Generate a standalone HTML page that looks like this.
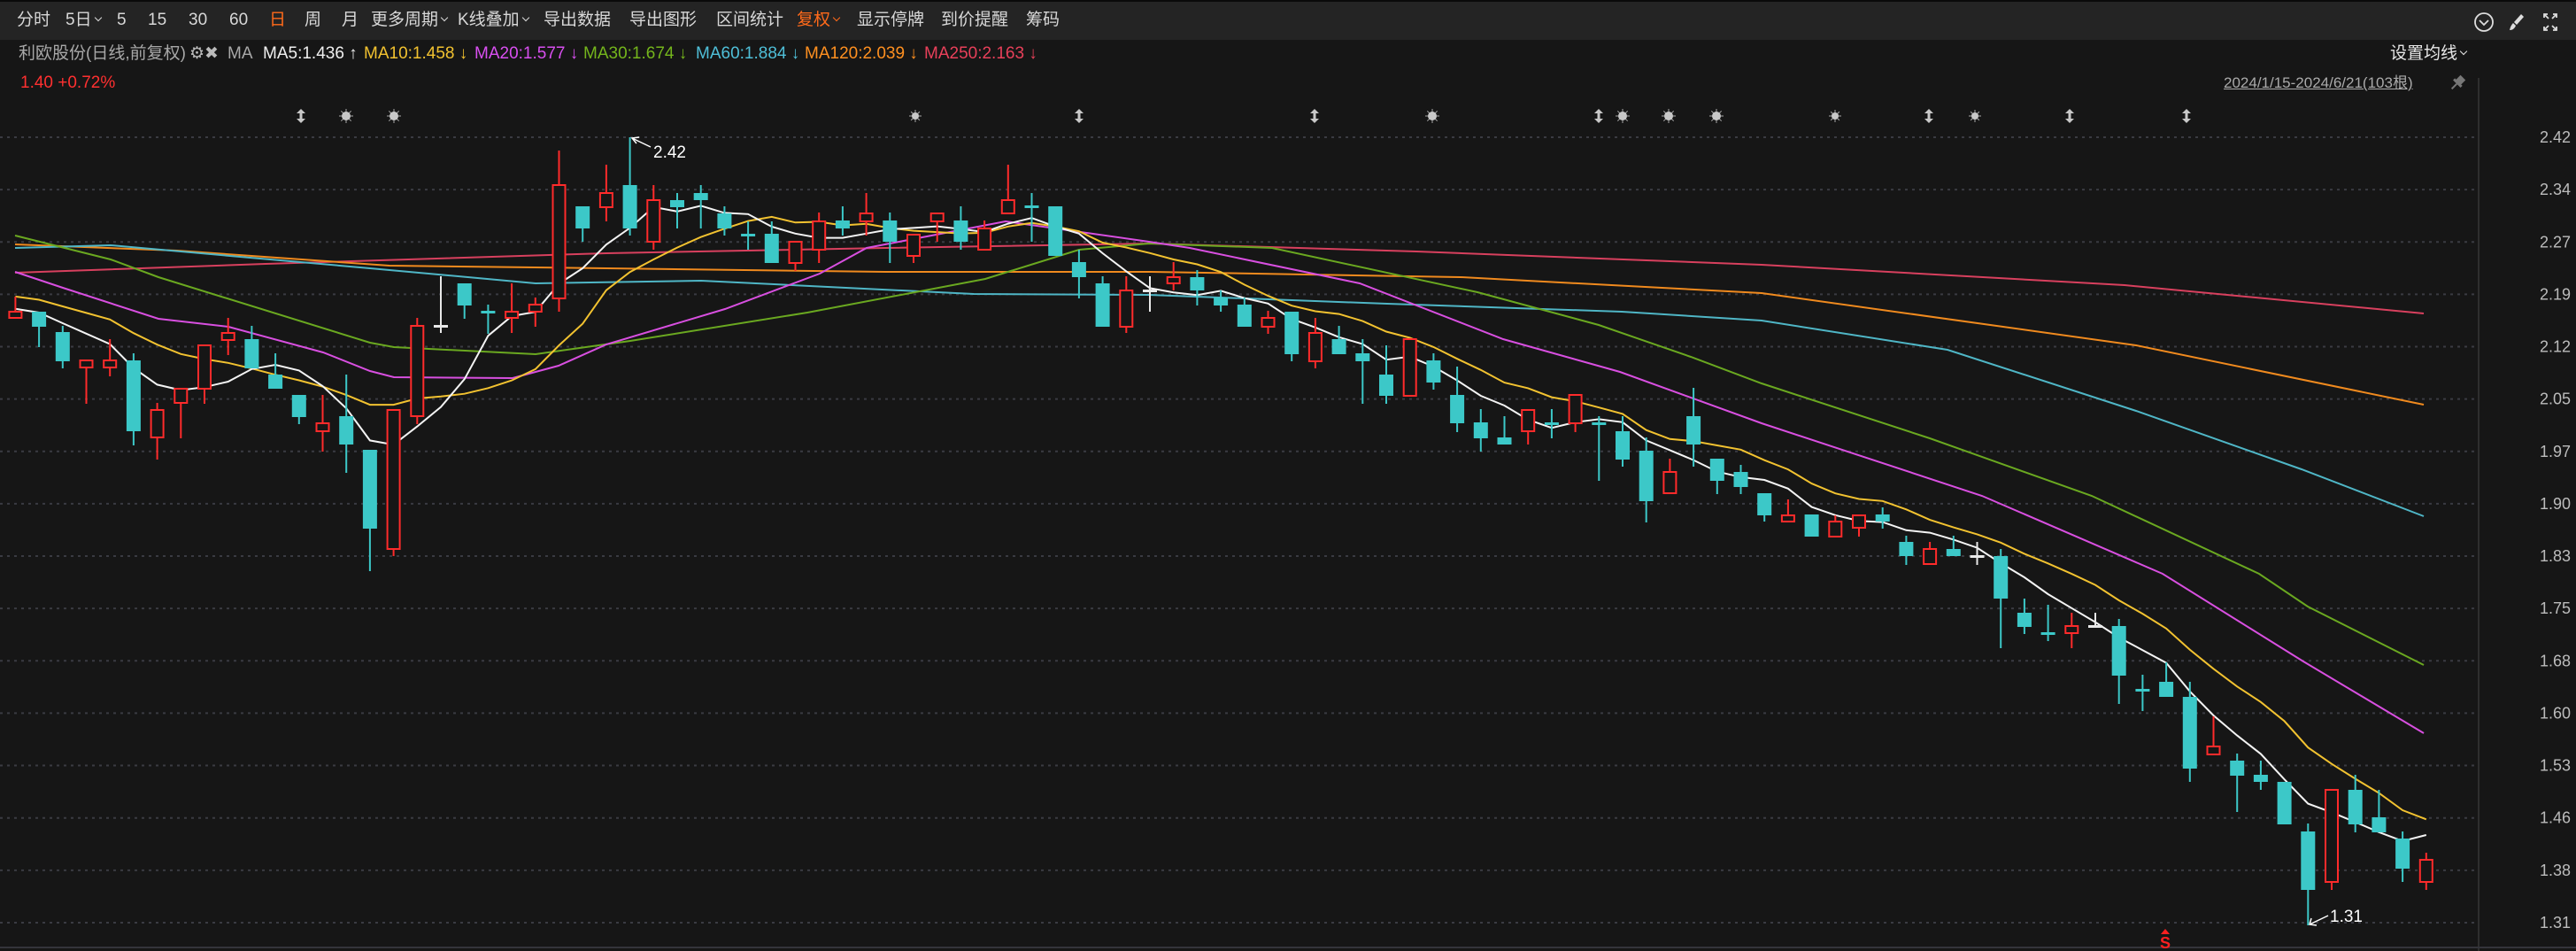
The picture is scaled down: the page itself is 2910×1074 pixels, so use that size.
<!DOCTYPE html>
<html><head><meta charset="utf-8">
<style>
html,body{margin:0;padding:0;background:#161616;}
body{width:2910px;height:1074px;overflow:hidden;position:relative;font-family:"Liberation Sans","Noto Sans CJK SC",sans-serif;}
#bar{position:absolute;left:0;top:0;width:2910px;height:45px;background:#242424;border-top:2px solid #0a0a0a;box-sizing:border-box;}
.t{position:absolute;white-space:nowrap;font-size:19px;line-height:20px;color:#d8d8d8;}
.cv{display:inline-block;width:5px;height:5px;border-right:1.5px solid currentColor;border-bottom:1.5px solid currentColor;transform:rotate(45deg);margin:0 3px 5px 4px;vertical-align:middle;}
svg{position:absolute;left:0;top:0;}
</style></head>
<body>
<div id="bar"></div>
<div class="t" style="left:19px;top:13px">分时</div>
<div class="t" style="left:74px;top:13px">5日<span class="cv"></span></div>
<div class="t" style="left:132px;top:13px">5</div>
<div class="t" style="left:167px;top:13px">15</div>
<div class="t" style="left:213px;top:13px">30</div>
<div class="t" style="left:259px;top:13px">60</div>
<div class="t" style="left:304px;top:13px;color:#ff6a1a">日</div>
<div class="t" style="left:344px;top:13px">周</div>
<div class="t" style="left:386px;top:13px">月</div>
<div class="t" style="left:419px;top:13px">更多周期<span class="cv"></span></div>
<div class="t" style="left:517px;top:13px">K线叠加<span class="cv"></span></div>
<div class="t" style="left:614px;top:13px">导出数据</div>
<div class="t" style="left:711px;top:13px">导出图形</div>
<div class="t" style="left:809px;top:13px">区间统计</div>
<div class="t" style="left:900px;top:13px;color:#ff6a1a">复权<span class="cv"></span></div>
<div class="t" style="left:968px;top:13px">显示停牌</div>
<div class="t" style="left:1063px;top:13px">到价提醒</div>
<div class="t" style="left:1159px;top:13px">筹码</div>

<div class="t" style="left:21px;top:51px;color:#a8a8a8">利欧股份(日线,前复权)</div>
<div class="t" style="left:214px;top:51px;color:#bbb">⚙✖</div>
<div class="t" style="left:257px;top:51px;color:#a8a8a8">MA</div>
<div class="t" style="left:297px;top:51px;color:#f0f0f0">MA5:1.436 ↑</div>
<div class="t" style="left:411px;top:51px;color:#f2c230">MA10:1.458 ↓</div>
<div class="t" style="left:536px;top:51px;color:#d84ff0">MA20:1.577 ↓</div>
<div class="t" style="left:659px;top:51px;color:#74b51c">MA30:1.674 ↓</div>
<div class="t" style="left:786px;top:51px;color:#4fbfd8">MA60:1.884 ↓</div>
<div class="t" style="left:909px;top:51px;color:#ff9020">MA120:2.039 ↓</div>
<div class="t" style="left:1044px;top:51px;color:#e8405a">MA250:2.163 ↓</div>
<div class="t" style="left:23px;top:84px;color:#ff3030">1.40 +0.72%</div>

<div class="t" style="left:2700px;top:51px;color:#e8e8e8">设置均线<span class="cv"></span></div>
<div class="t" style="left:2512px;top:84px;color:#aaa;font-size:17px;text-decoration:underline">2024/1/15-2024/6/21(103根)</div>

<svg id="s" width="2910" height="1074" xmlns="http://www.w3.org/2000/svg"></svg>
<script>
var D=[
[352,359,335,359,'r'],[352,369,352,392,'g'],[375,408,368,416,'g'],[407,415,407,456,'r'],[407,415,383,425,'r'],
[407,487,399,503,'g'],[463,494,455,519,'r'],[439,455,439,495,'r'],[390,439,390,456,'r'],[376,384,359,401,'r'],
[383,416,368,416,'g'],[423,439,399,439,'g'],[446,471,446,479,'g'],[478,487,446,510,'r'],[470,502,423,534,'g'],
[508,597,508,645,'g'],[463,620,463,628,'r'],[368,470,359,479,'r'],[368,368,312,376,'w'],[320,345,320,360,'g'],
[352,352,344,377,'g'],[352,359,320,376,'r'],[344,352,336,369,'r'],[209,337,170,352,'r'],[233,258,233,273,'g'],
[218,234,186,250,'r'],[209,258,155,266,'g'],[226,273,209,282,'r'],[226,234,218,258,'g'],[218,226,209,258,'g'],
[241,258,233,266,'g'],[265,265,250,282,'g'],[264,297,250,297,'g'],[273,297,273,306,'r'],[250,282,240,297,'r'],
[249,258,233,266,'g'],[241,250,218,266,'r'],[249,273,240,297,'g'],[265,289,265,297,'r'],[241,250,241,273,'r'],
[249,273,233,282,'g'],[258,282,249,282,'r'],[226,241,186,241,'r'],[233,233,218,273,'g'],[233,289,233,289,'g'],
[296,313,282,337,'g'],[320,369,312,369,'g'],[328,369,312,376,'r'],[328,328,312,352,'w'],[313,320,296,328,'r'],
[313,328,305,345,'g'],[336,345,328,352,'g'],[344,369,336,369,'g'],[359,369,351,377,'r'],[352,400,352,408,'g'],
[376,408,359,416,'r'],[383,400,368,400,'g'],[399,408,383,456,'g'],[423,447,390,456,'g'],[383,447,383,447,'r'],
[407,432,399,440,'g'],[446,478,414,488,'g'],[477,495,462,510,'g'],[494,502,470,502,'g'],[463,487,463,502,'r'],
[478,478,462,495,'g'],[446,478,446,488,'r'],[478,478,470,543,'g'],[487,519,470,527,'g'],[509,566,494,590,'g'],
[533,557,518,557,'r'],[470,502,438,527,'g'],[518,543,518,558,'g'],[533,550,525,558,'g'],[557,582,557,589,'g'],
[582,589,564,589,'r'],[581,606,581,606,'g'],[589,606,582,606,'r'],[582,596,582,606,'r'],[581,589,573,597,'g'],
[612,628,605,638,'g'],[620,637,612,637,'r'],[620,628,605,628,'g'],[628,628,612,638,'w'],[628,676,620,732,'g'],
[692,708,676,716,'g'],[715,715,683,724,'g'],[707,715,692,732,'r'],[707,707,692,707,'w'],[707,763,699,795,'g'],
[779,779,762,803,'g'],[770,787,748,787,'g'],[787,868,770,883,'g'],[843,852,809,852,'r'],[859,876,851,917,'g'],
[875,883,859,892,'g'],[883,931,883,931,'g'],[939,1005,930,1045,'g'],[892,996,892,1005,'r'],[892,931,875,940,'g'],
[923,940,892,940,'g'],[947,981,939,996,'g'],[971,996,963,1005,'r']];
var h='';
function X(i){return 17.4+i*26.7;}
var labs=['2.42','2.34','2.27','2.19','2.12','2.05','1.97','1.90','1.83','1.75','1.68','1.60','1.53','1.46','1.38','1.31'];
for(var k=0;k<16;k++){var y=155+k*59.13;
h+='<line x1="0" y1="'+y+'" x2="2800" y2="'+y+'" stroke="#3a3b42" stroke-width="2" stroke-dasharray="3,5"/>';
h+='<text x="2904" y="'+(y+6)+'" fill="#bcbcbc" font-size="18" text-anchor="end" font-family="Liberation Sans,sans-serif">'+labs[k]+'</text>';}
h+='<line x1="2800" y1="88" x2="2800" y2="1074" stroke="#2e2e2e" stroke-width="2"/>';
h+='<line x1="0" y1="1070" x2="2910" y2="1070" stroke="#34343a" stroke-width="2"/>';
function pl(pts,c){var s='';for(var i=0;i<pts.length;i++)s+=pts[i][0]+','+pts[i][1]+' ';return '<polyline points="'+s+'" fill="none" stroke="'+c+'" stroke-width="2"/>';}
h+=pl([[17,308],[300,298],[685,286],[1000,280],[1300,275],[1600,284],[1990,299],[2400,322],[2738,354]],'#d8405e');
h+=pl([[17,276],[200,283],[440,300],[685,303],[1000,307],[1300,307],[1650,313],[1990,331],[2413,390],[2738,457]],'#f08a1e');
h+=pl([[17,280],[125,277],[418,303],[605,320],[792,317],[1100,332],[1298,333],[1567,343],[1832,352],[1990,362],[2200,395],[2413,464],[2600,530],[2738,583]],'#4fb6c6');
h+=pl([[17,266],[125,293],[179,313],[418,387],[445,392],[605,400],[712,385],[912,353],[1113,315],[1219,282],[1298,275],[1437,280],[1669,330],[1806,367],[1910,403],[1990,433],[2180,495],[2363,560],[2552,648],[2607,685],[2738,751]],'#6aa820');
h+=pl([[17,307],[71,325],[179,360],[258,369],[365,398],[418,419],[445,426],[579,427],[631,413],[685,389],[819,349],[926,309],[979,280],[1136,250],[1298,273],[1344,280],[1536,320],[1698,383],[1830,420],[1990,478],[2239,560],[2443,648],[2602,747],[2738,828]],'#d84fe0');
var C=D.map(function(d){return d[4]=='g'?d[1]:d[0];});
function ma(n,p){var pts=[];for(var i=0;i<C.length;i++){var s=0;for(var j=i-n+1;j<=i;j++)s+=(j<0?p:C[j]);pts.push([X(i).toFixed(1),(s/n).toFixed(1)]);}return pts;}
h+=pl(ma(10,333),'#f2c230');
h+=pl(ma(5,348),'#f4f4f4');
for(var i=0;i<D.length;i++){var d=D[i],x=X(i);
 var col=d[4]=='r'?'#ff2b2b':(d[4]=='g'?'#3cc8c8':'#e8e8e8');
 if(d[4]=='r'){
  h+='<line x1="'+x+'" y1="'+d[2]+'" x2="'+x+'" y2="'+d[0]+'" stroke="'+col+'" stroke-width="2"/>';
  h+='<line x1="'+x+'" y1="'+d[1]+'" x2="'+x+'" y2="'+d[3]+'" stroke="'+col+'" stroke-width="2"/>';
  h+='<rect x="'+(x-7)+'" y="'+d[0]+'" width="14" height="'+Math.max(d[1]-d[0],2)+'" fill="#161616" stroke="'+col+'" stroke-width="2"/>';
 } else {
  h+='<line x1="'+x+'" y1="'+d[2]+'" x2="'+x+'" y2="'+d[3]+'" stroke="'+col+'" stroke-width="2"/>';
  if(d[1]-d[0]<3) h+='<rect x="'+(x-8)+'" y="'+(d[0]-1)+'" width="16" height="3" fill="'+col+'"/>';
  else h+='<rect x="'+(x-8)+'" y="'+d[0]+'" width="16" height="'+(d[1]-d[0])+'" fill="'+col+'"/>';
 }}
h+='<line x1="714" y1="156" x2="735" y2="166" stroke="#fff" stroke-width="1.5"/><polyline points="722,155 714,156 719,162" fill="none" stroke="#fff" stroke-width="1.5"/>';
h+='<text x="738" y="178" fill="#fff" font-size="19" font-family="Liberation Sans,sans-serif">2.42</text>';
h+='<line x1="2609" y1="1044" x2="2630" y2="1034" stroke="#fff" stroke-width="1.5"/><polyline points="2611,1037 2609,1044 2617,1045" fill="none" stroke="#fff" stroke-width="1.5"/>';
h+='<text x="2632" y="1041" fill="#fff" font-size="19" font-family="Liberation Sans,sans-serif">1.31</text>';
h+='<polygon points="2446,1049 2441,1055 2451,1055" fill="#ff2020"/><text x="2446" y="1071" fill="#ff2020" font-size="18" font-weight="bold" text-anchor="middle" font-family="Liberation Sans,sans-serif">S</text>';
function arr(x){return '<g fill="#c8c8c8"><polygon points="'+x+',123 '+(x-5)+',128 '+(x+5)+',128"/><rect x="'+(x-1.5)+'" y="127" width="3" height="8"/><polygon points="'+x+',139 '+(x-5)+',134 '+(x+5)+',134"/></g>';}
function star(x,r){r=r||5;var s='<g stroke="#aaa" stroke-width="1">';for(var a=0;a<8;a++){var t=a*Math.PI/4;s+='<line x1="'+x+'" y1="131" x2="'+(x+Math.cos(t)*(r+3)).toFixed(1)+'" y2="'+(131+Math.sin(t)*(r+3)).toFixed(1)+'"/>';}return s+'</g><circle cx="'+x+'" cy="131" r="'+r+'" fill="#c8c8c8"/>';}
[340,1219,1485,1806,2179,2338,2470].forEach(function(x){h+=arr(x);});
[391,445,1618,1833,1885,1939].forEach(function(x){h+=star(x);});
[1034,2073,2231].forEach(function(x){h+=star(x,4);});
h+='<circle cx="2806" cy="25" r="10" fill="none" stroke="#ddd" stroke-width="1.8"/><polyline points="2801,23 2806,28 2811,23" fill="none" stroke="#ddd" stroke-width="1.8"/>';
h+='<path d="M2848,16 L2851,19 L2843,28 L2840,25 Z" fill="#ddd"/><path d="M2839,26 L2842,29 Q2840,34 2835,34 Q2836,29 2839,26 Z" fill="#ddd"/>';
h+='<g stroke="#ddd" stroke-width="1.8" fill="none"><polyline points="2874,20 2874,16 2878,16"/><line x1="2874" y1="16" x2="2879" y2="21"/><polyline points="2884,16 2888,16 2888,20"/><line x1="2888" y1="16" x2="2883" y2="21"/><polyline points="2874,30 2874,34 2878,34"/><line x1="2874" y1="34" x2="2879" y2="29"/><polyline points="2884,34 2888,34 2888,30"/><line x1="2888" y1="34" x2="2883" y2="29"/></g>';
h+='<g transform="translate(2776,94) rotate(45)" fill="#777"><rect x="-4" y="-9" width="8" height="8"/><rect x="-6" y="-2" width="12" height="3"/><rect x="-1" y="1" width="2" height="8"/></g>';
document.getElementById('s').innerHTML=h;
</script>
</body></html>
